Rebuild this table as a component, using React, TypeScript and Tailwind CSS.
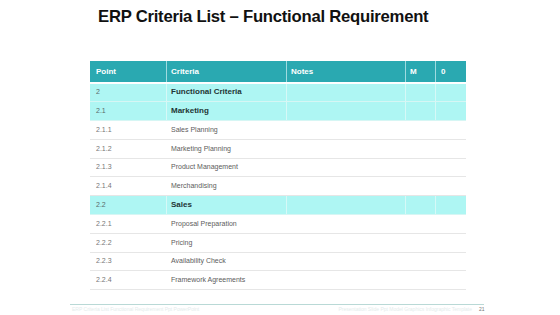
import React from "react";

type Row = { p: string; c: string; hl?: boolean };
const rows: Row[] = [
  { p: "2", c: "Functional Criteria", hl: true },
  { p: "2.1", c: "Marketing", hl: true },
  { p: "2.1.1", c: "Sales Planning" },
  { p: "2.1.2", c: "Marketing Planning" },
  { p: "2.1.3", c: "Product Management" },
  { p: "2.1.4", c: "Merchandising" },
  { p: "2.2", c: "Sales", hl: true },
  { p: "2.2.1", c: "Proposal Preparation" },
  { p: "2.2.2", c: "Pricing" },
  { p: "2.2.3", c: "Availability Check" },
  { p: "2.2.4", c: "Framework Agreements" },
];

export default function App() {
  return (
    <div
      className="w-[560px] h-[315px] bg-white relative overflow-hidden"
      style={{ fontFamily: '"Liberation Sans", Arial, sans-serif' }}
    >
      <div className="pl-[98px] pt-[8px] text-[16.7px] font-bold text-[#111] leading-[18px] tracking-[-0.25px]">
        ERP Criteria List – Functional Requirement
      </div>
      <div className="ml-[90px] mt-[35px] w-[376px]">
        <div className="flex h-[21px] bg-[#2aa9b1] text-white font-bold text-[8px] items-stretch">
          <div className="w-[77px] pl-[6px] flex items-center border-r border-[#9fdbe0]">Point</div>
          <div className="w-[120px] pl-[4px] flex items-center border-r border-[#9fdbe0]">Criteria</div>
          <div className="w-[119px] pl-[4px] flex items-center border-r border-[#9fdbe0]">Notes</div>
          <div className="w-[30px] pl-[4px] flex items-center border-r border-[#9fdbe0]">M</div>
          <div className="flex-1 pl-[5px] flex items-center">0</div>
        </div>
        <div className="h-[1.5px] bg-white" />
        {rows.map((r) =>
          r.hl ? (
            <div key={r.p} className="flex h-[18.8px] bg-[#aef6f3] border-b border-[#d6f6f4] items-stretch">
              <div className="w-[77px] pl-[6px] flex items-center border-r border-[#d6f9f7] text-[7px] text-[#5a6b6b]">{r.p}</div>
              <div className="w-[120px] pl-[4px] flex items-center border-r border-[#d6f9f7] text-[8px] font-bold text-[#1f3535]">{r.c}</div>
              <div className="w-[119px] border-r border-[#d6f9f7]" />
              <div className="w-[30px] border-r border-[#d6f9f7]" />
              <div className="flex-1" />
            </div>
          ) : (
            <div key={r.p} className="flex h-[18.8px] bg-white border-b border-[#e6e6e6] items-stretch">
              <div className="w-[77px] pl-[6px] flex items-center text-[7px] text-[#777]">{r.p}</div>
              <div className="w-[120px] pl-[4px] flex items-center text-[7px] text-[#5c5c5c]">{r.c}</div>
              <div className="flex-1" />
            </div>
          )
        )}
      </div>
      <div className="absolute left-[70px] top-[304px] w-[414px] h-[1px] bg-[#b9d9d6]" />
      <div className="absolute left-[72px] top-[306px] w-[400px] flex justify-between text-[5px] leading-[6px] text-[#e4ecec]">
        <span>ERP Criteria List Functional Requirement Ppt PowerPoint</span>
        <span>Presentation Slide Ppt Model Graphics Infographic Template</span>
      </div>
      <div className="absolute left-[479px] top-[306px] text-[5px] leading-[6px] text-[#777]">21</div>
    </div>
  );
}
